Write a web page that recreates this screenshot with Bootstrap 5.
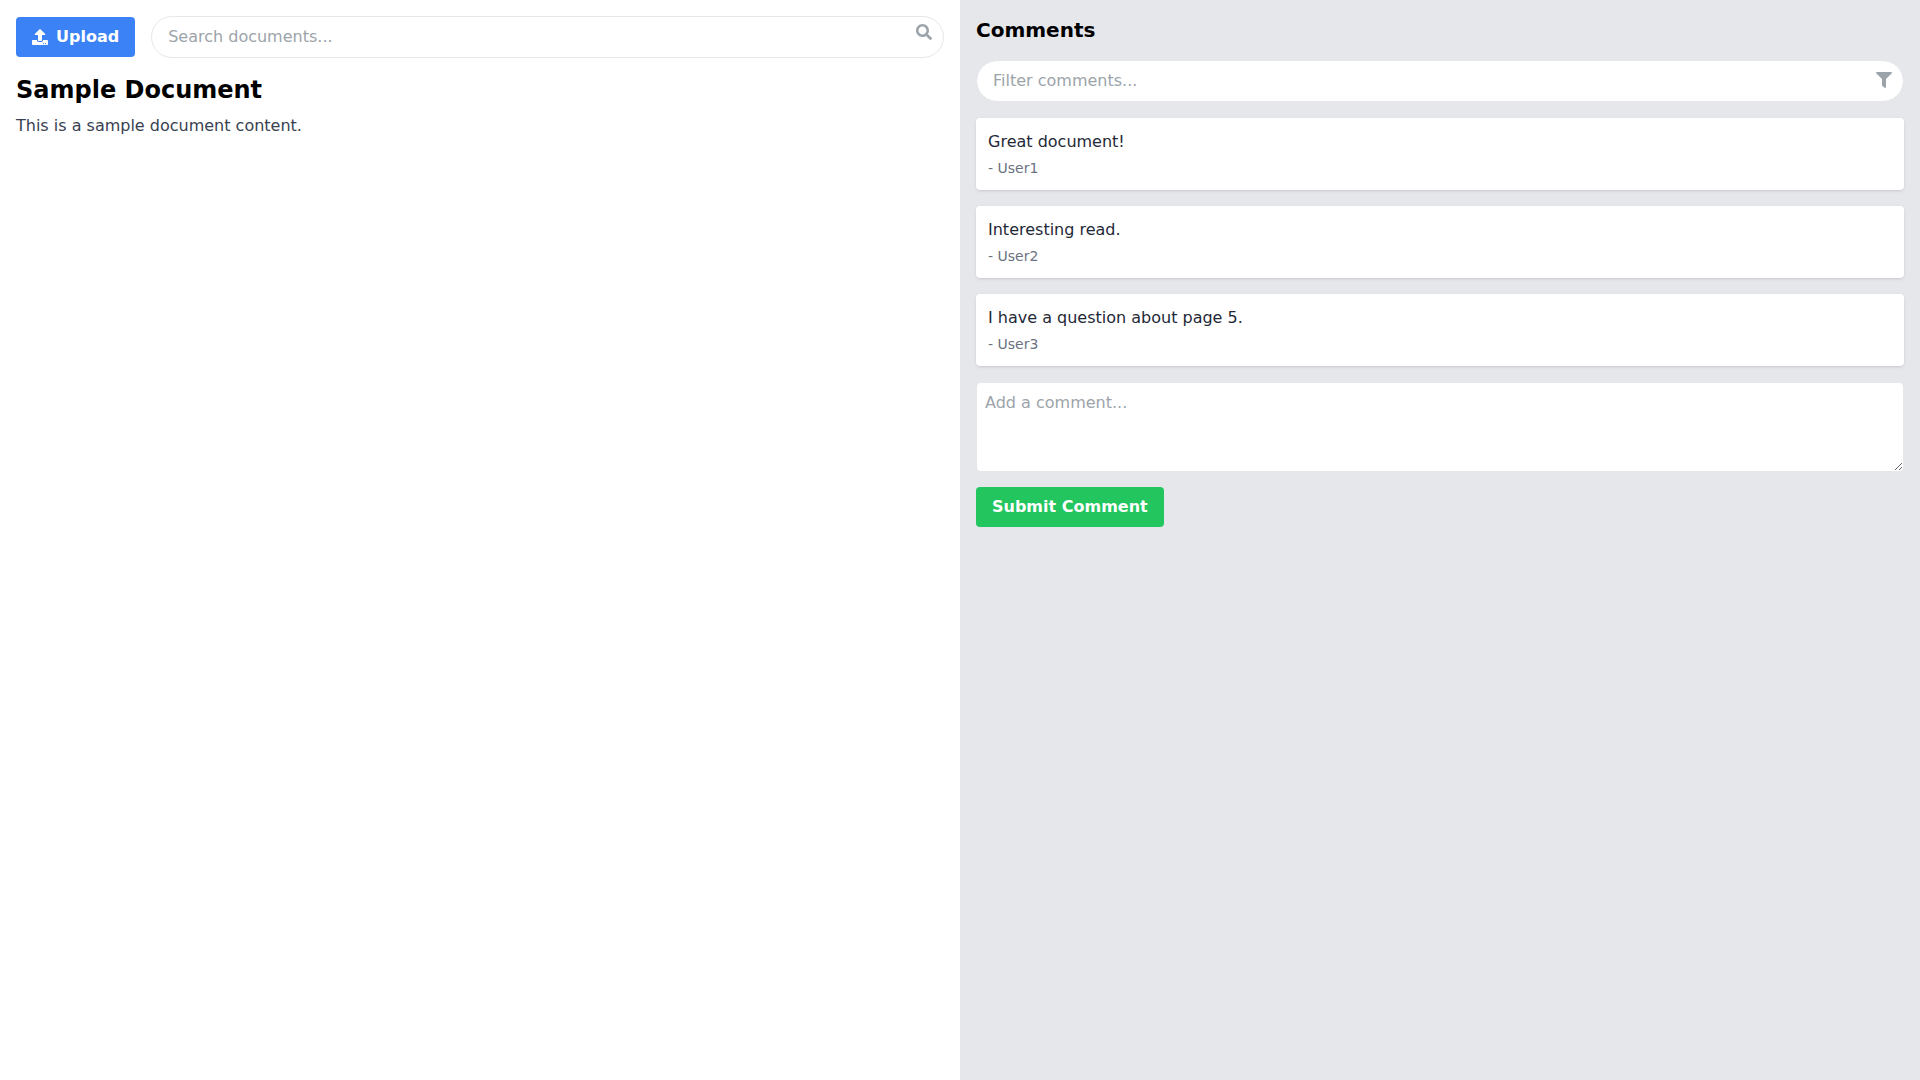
<!DOCTYPE html>
<html lang="en">

<head>
  <meta charset="UTF-8">
  <meta name="viewport" content="width=device-width, initial-scale=1.0">
  <title>Document Viewer</title>
  <link href="https://cdn.jsdelivr.net/npm/bootstrap@5.3.3/dist/css/bootstrap.min.css" rel="stylesheet">
  <style>
    body {
      font-family: "DejaVu Sans", sans-serif;
      font-size: 16px;
      line-height: 24px;
      color: #000;
    }
    .doc-pane {
      height: 100vh;
      padding: 16px;
    }
    .side-pane {
      background: #e5e7eb;
    }
    .upload-btn {
      background: #3b82f6;
      border: 0;
      border-radius: 4px;
      color: #fff;
      font-weight: 700;
      padding: 8px 16px;
      height: 40px;
      line-height: 24px;
      white-space: nowrap;
    }
    .upload-btn:hover {
      background: #2563eb;
      color: #fff;
    }
    .upload-btn svg {
      width: 16px;
      height: 16px;
      fill: #fff;
      margin-right: 8px;
    }
    .search-input {
      border: 1px solid #e5e7eb;
      border-radius: 999px;
      padding: 8px 16px;
      font-size: 16px;
      line-height: 24px;
      color: #1f2937;
    }
    .search-input::placeholder,
    .comment-box::placeholder {
      color: #9ca4aa;
    }
    .field-icon {
      position: absolute;
      right: 12px;
      width: 16px;
      height: 16px;
      fill: #9ca4aa;
    }
    .search-icon {
      top: 8px;
    }
    .filter-icon {
      top: 12px;
    }
    .doc-title {
      font-size: 24px;
      line-height: 32px;
      font-weight: 700;
      margin: 0 0 8px;
    }
    .doc-text {
      color: #374151;
      margin: 0;
    }
    .side-title {
      font-size: 20px;
      line-height: 28px;
      font-weight: 700;
      margin: 0 0 16px;
    }
    .comment-card {
      background: #fff;
      border-radius: 4px;
      padding: 12px;
      margin-bottom: 16px;
      box-shadow: 0 1px 3px rgba(0, 0, 0, .1), 0 1px 2px -1px rgba(0, 0, 0, .1);
      color: #1f2937;
    }
    .comment-user {
      display: block;
      font-size: 14px;
      line-height: 20px;
      color: #6b7280;
      margin-top: 4px;
    }
    .comment-box {
      border: 1px solid #e5e7eb;
      border-radius: 4px;
      padding: 8px;
      font-size: 16px;
      line-height: 24px;
      height: 90px;
      margin-bottom: 15px;
      display: block;
    }
    .submit-btn {
      background: #22c55e;
      border: 0;
      border-radius: 4px;
      color: #fff;
      font-weight: 700;
      padding: 8px 16px;
      height: 40px;
      line-height: 24px;
    }
    .submit-btn:hover {
      background: #16a34a;
      color: #fff;
    }
  </style>
</head>

<body>
  <div class="container-fluid p-0">
    <div class="row g-0">
      <div class="col-6 doc-pane">
        <div class="d-flex align-items-center gap-3 mb-3">
          <button type="button" class="btn upload-btn d-flex align-items-center">
            <svg viewBox="0 0 512 512" aria-hidden="true"><path d="M296 384h-80c-13.3 0-24-10.7-24-24V192h-87.7c-17.8 0-26.7-21.5-14.1-34.1L242.3 5.7c7.5-7.5 19.8-7.5 27.3 0l152.2 152.2c12.6 12.6 3.7 34.1-14.1 34.1H320v168c0 13.3-10.7 24-24 24zm216-8v112c0 13.3-10.7 24-24 24H24c-13.3 0-24-10.7-24-24V376c0-13.3 10.7-24 24-24h136v8c0 30.9 25.1 56 56 56h80c30.9 0 56-25.1 56-56v-8h136c13.3 0 24 10.7 24 24zm-124 88c0-11-9-20-20-20s-20 9-20 20 9 20 20 20 20-9 20-20zm64 0c0-11-9-20-20-20s-20 9-20 20 9 20 20 20 20-9 20-20z"/></svg>
            Upload
          </button>
          <div class="position-relative flex-grow-1">
            <input type="text" class="form-control search-input" placeholder="Search documents...">
            <svg class="field-icon search-icon" viewBox="0 0 512 512" aria-hidden="true"><path d="M505 442.7L405.3 343c-4.5-4.5-10.6-7-17-7H372c27.6-35.3 44-79.7 44-128C416 93.1 322.9 0 208 0S0 93.1 0 208s93.1 208 208 208c48.3 0 92.7-16.4 128-44v16.3c0 6.4 2.5 12.5 7 17l99.7 99.7c9.4 9.4 24.6 9.4 33.9 0l28.3-28.3c9.4-9.4 9.4-24.6.1-34zM208 336c-70.7 0-128-57.2-128-128 0-70.7 57.2-128 128-128 70.7 0 128 57.2 128 128 0 70.7-57.2 128-128 128z"/></svg>
          </div>
        </div>
        <h1 class="doc-title">Sample Document</h1>
        <p class="doc-text">This is a sample document content.</p>
      </div>

      <div class="col-6 doc-pane side-pane">
        <h2 class="side-title">Comments</h2>
        <div class="position-relative mb-3">
          <input type="text" class="form-control search-input" placeholder="Filter comments...">
          <svg class="field-icon filter-icon" viewBox="0 0 512 512" aria-hidden="true"><path d="M487.976 0H24.028C2.71 0-8.047 25.866 7.058 40.971L192 225.941V432c0 7.831 3.821 15.17 10.237 19.662l80 55.98C298.02 518.69 320 507.493 320 487.98V225.941l184.947-184.97C520.021 25.896 509.338 0 487.976 0z"/></svg>
        </div>
        <div class="comment-card">Great document!<span class="comment-user">- User1</span></div>
        <div class="comment-card">Interesting read.<span class="comment-user">- User2</span></div>
        <div class="comment-card">I have a question about page 5.<span class="comment-user">- User3</span></div>
        <textarea class="form-control comment-box" placeholder="Add a comment..."></textarea>
        <button type="button" class="btn submit-btn">Submit Comment</button>
      </div>
    </div>
  </div>
  <script src="https://cdn.jsdelivr.net/npm/bootstrap@5.3.3/dist/js/bootstrap.bundle.min.js"></script>
</body>

</html>
